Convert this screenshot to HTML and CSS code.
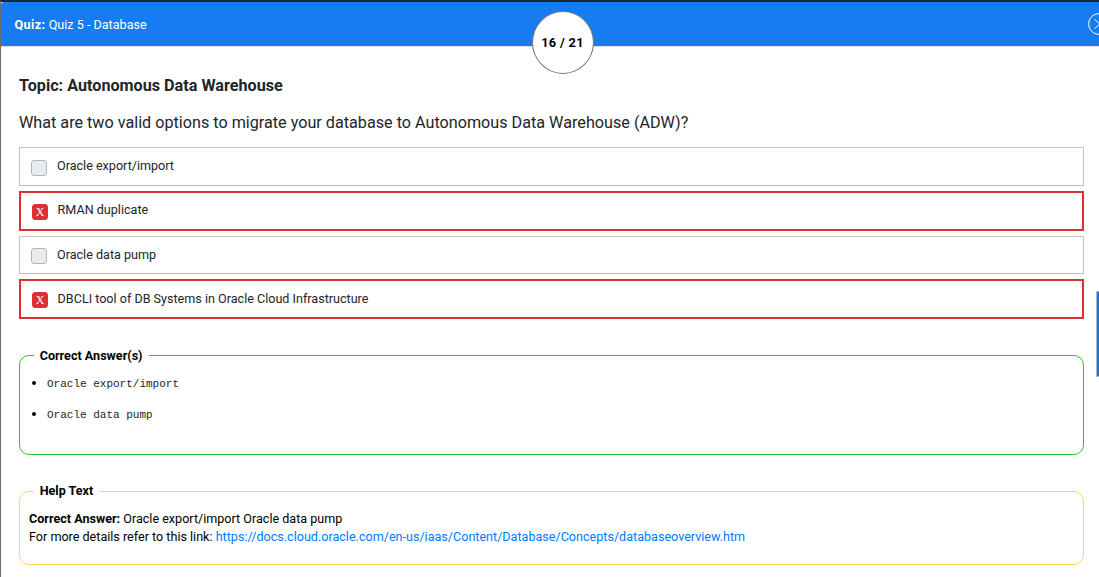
FILE: index.html
```html
<!DOCTYPE html>
<html lang="en">
<head>
<meta charset="utf-8">
<title>Quiz 5 - Database</title>
<link rel="stylesheet" href="styles.css">
</head>
<body>
<div class="modal">
  <header class="header">
    <div class="quiz-name"><b>Quiz:</b> Quiz 5 - Database</div>
    <div class="counter">16 / 21</div>
    <svg class="close" width="22" height="22" viewBox="0 0 22 22" fill="none" stroke="#fff"><circle cx="11" cy="11" r="10.4"/><path d="M6.5 6l10 10M16.5 6l-10 10"/></svg>
  </header>
  <main class="content">
    <h1 class="topic">Topic: Autonomous Data Warehouse</h1>
    <p class="question">What are two valid options to migrate your database to Autonomous Data Warehouse (ADW)?</p>
    <div class="options">
      <div class="option first"><span class="box"></span><span class="label">Oracle export/import</span></div>
      <div class="option wrong raised"><span class="box">X</span><span class="label">RMAN duplicate</span></div>
      <div class="option"><span class="box"></span><span class="label">Oracle data pump</span></div>
      <div class="option wrong"><span class="box">X</span><span class="label">DBCLI tool of DB Systems in Oracle Cloud Infrastructure</span></div>
    </div>
    <fieldset class="panel answers">
      <legend class="legend">Correct Answer(s)</legend>
      <ul class="list">
        <li><span>Oracle export/import</span></li>
        <li><span>Oracle data pump</span></li>
      </ul>
    </fieldset>
    <fieldset class="panel help">
      <legend class="legend">Help Text</legend>
      <div class="help-body"><b>Correct Answer:</b> Oracle export/import Oracle data pump<br>For more details refer to this link: <a class="link" href="#">https://docs.cloud.oracle.com/en-us/iaas/Content/Database/Concepts/databaseoverview.htm</a></div>
    </fieldset>
  </main>
  <div class="side-tab"></div>
</div>
</body>
</html>
```

FILE: styles.css
```css
* { box-sizing: border-box; }
body {
  margin: 0;
  height: 577px;
  overflow: hidden;
  background: #fff;
  color: #212529;
  font: 12.59px/18px Roboto, sans-serif;
}
.modal {
  position: relative;
  height: 577px;
  overflow: hidden;
  border-top: 2px solid #202531;
  border-left: 1px solid #6b6b6b;
}
.header {
  position: relative;
  height: 45px;
  padding: 14px 0 0 13.5px;
  background: #177bf2;
  border-bottom: 1px solid #dee2e6;
  border-top-left-radius: 3px;
  color: #fff;
}
.quiz-name { font-size: 12.6px; }
.quiz-name b { font-weight: 700; letter-spacing: .4px; }
.counter {
  position: absolute;
  left: 531px;
  top: 9px;
  width: 62px;
  height: 63px;
  border: 1px solid #777;
  border-radius: 50%;
  background: #fff;
  color: #000;
  font-weight: 700;
  font-size: 12.8px;
  line-height: 61px;
  text-align: center;
  letter-spacing: .3px;
  padding-right: 1px;
}
.close { position: absolute; left: 1087px; top: 11px; }
.content { padding: 29px 15px 0 18px; }
.topic { margin: 0; font-size: 16.18px; line-height: 20px; font-weight: 700; }
.question { margin: 17px 0 14px; font-size: 16.18px; line-height: 20px; }
.options { display: flex; flex-direction: column; gap: 5px; }
.option {
  display: flex;
  height: 38px;
  padding: 9px 0 0 11px;
  border: 1px solid #c2c3c4;
}
.option.first { height: 39px; }
.option.wrong { height: 40px; border: 2px solid #dc3033; }
.option.raised { padding-top: 8px; }
.box {
  width: 16px;
  height: 16px;
  margin: 2px 10px 0 0;
  border: 1px solid #adb5bd;
  border-radius: 3px;
  background: #e9ecef;
}
.first .box, .raised .box { margin-top: 3px; }
.wrong .box {
  border-color: #dc3033;
  background: #dc3033;
  color: #fff;
  font: 12px/15px "Liberation Serif", serif;
  text-align: center;
}
.wrong .label { margin-left: -.4px; }
.panel {
  height: 109px;
  min-width: 0;
  margin: 27px 0 0;
  padding: 0 9px;
  border: 1px solid #20cb29;
  border-radius: 10px;
  color: #000;
}
.legend { margin-left: 4.7px; padding: 0 6px; font-weight: 700; line-height: 19px; }
.list { margin: 9px 0 0; padding: 0 0 0 18px; font-size: 12.8px; }
.list li { height: 31px; }
.list span { color: #212529; font: 11px "Liberation Mono", monospace; }
.help { height: 83px; border-color: #ffd557; }
.help .legend { line-height: 17px; padding-bottom: 2px; }
.help-body { margin-top: 9px; }
.link { color: #007bff; text-decoration: none; }
.side-tab {
  position: absolute;
  left: 1095px;
  top: 289px;
  width: 10px;
  height: 86px;
  border: 1px solid #a5b8cc;
  border-radius: 1px;
  background: #2470cf;
}
```
